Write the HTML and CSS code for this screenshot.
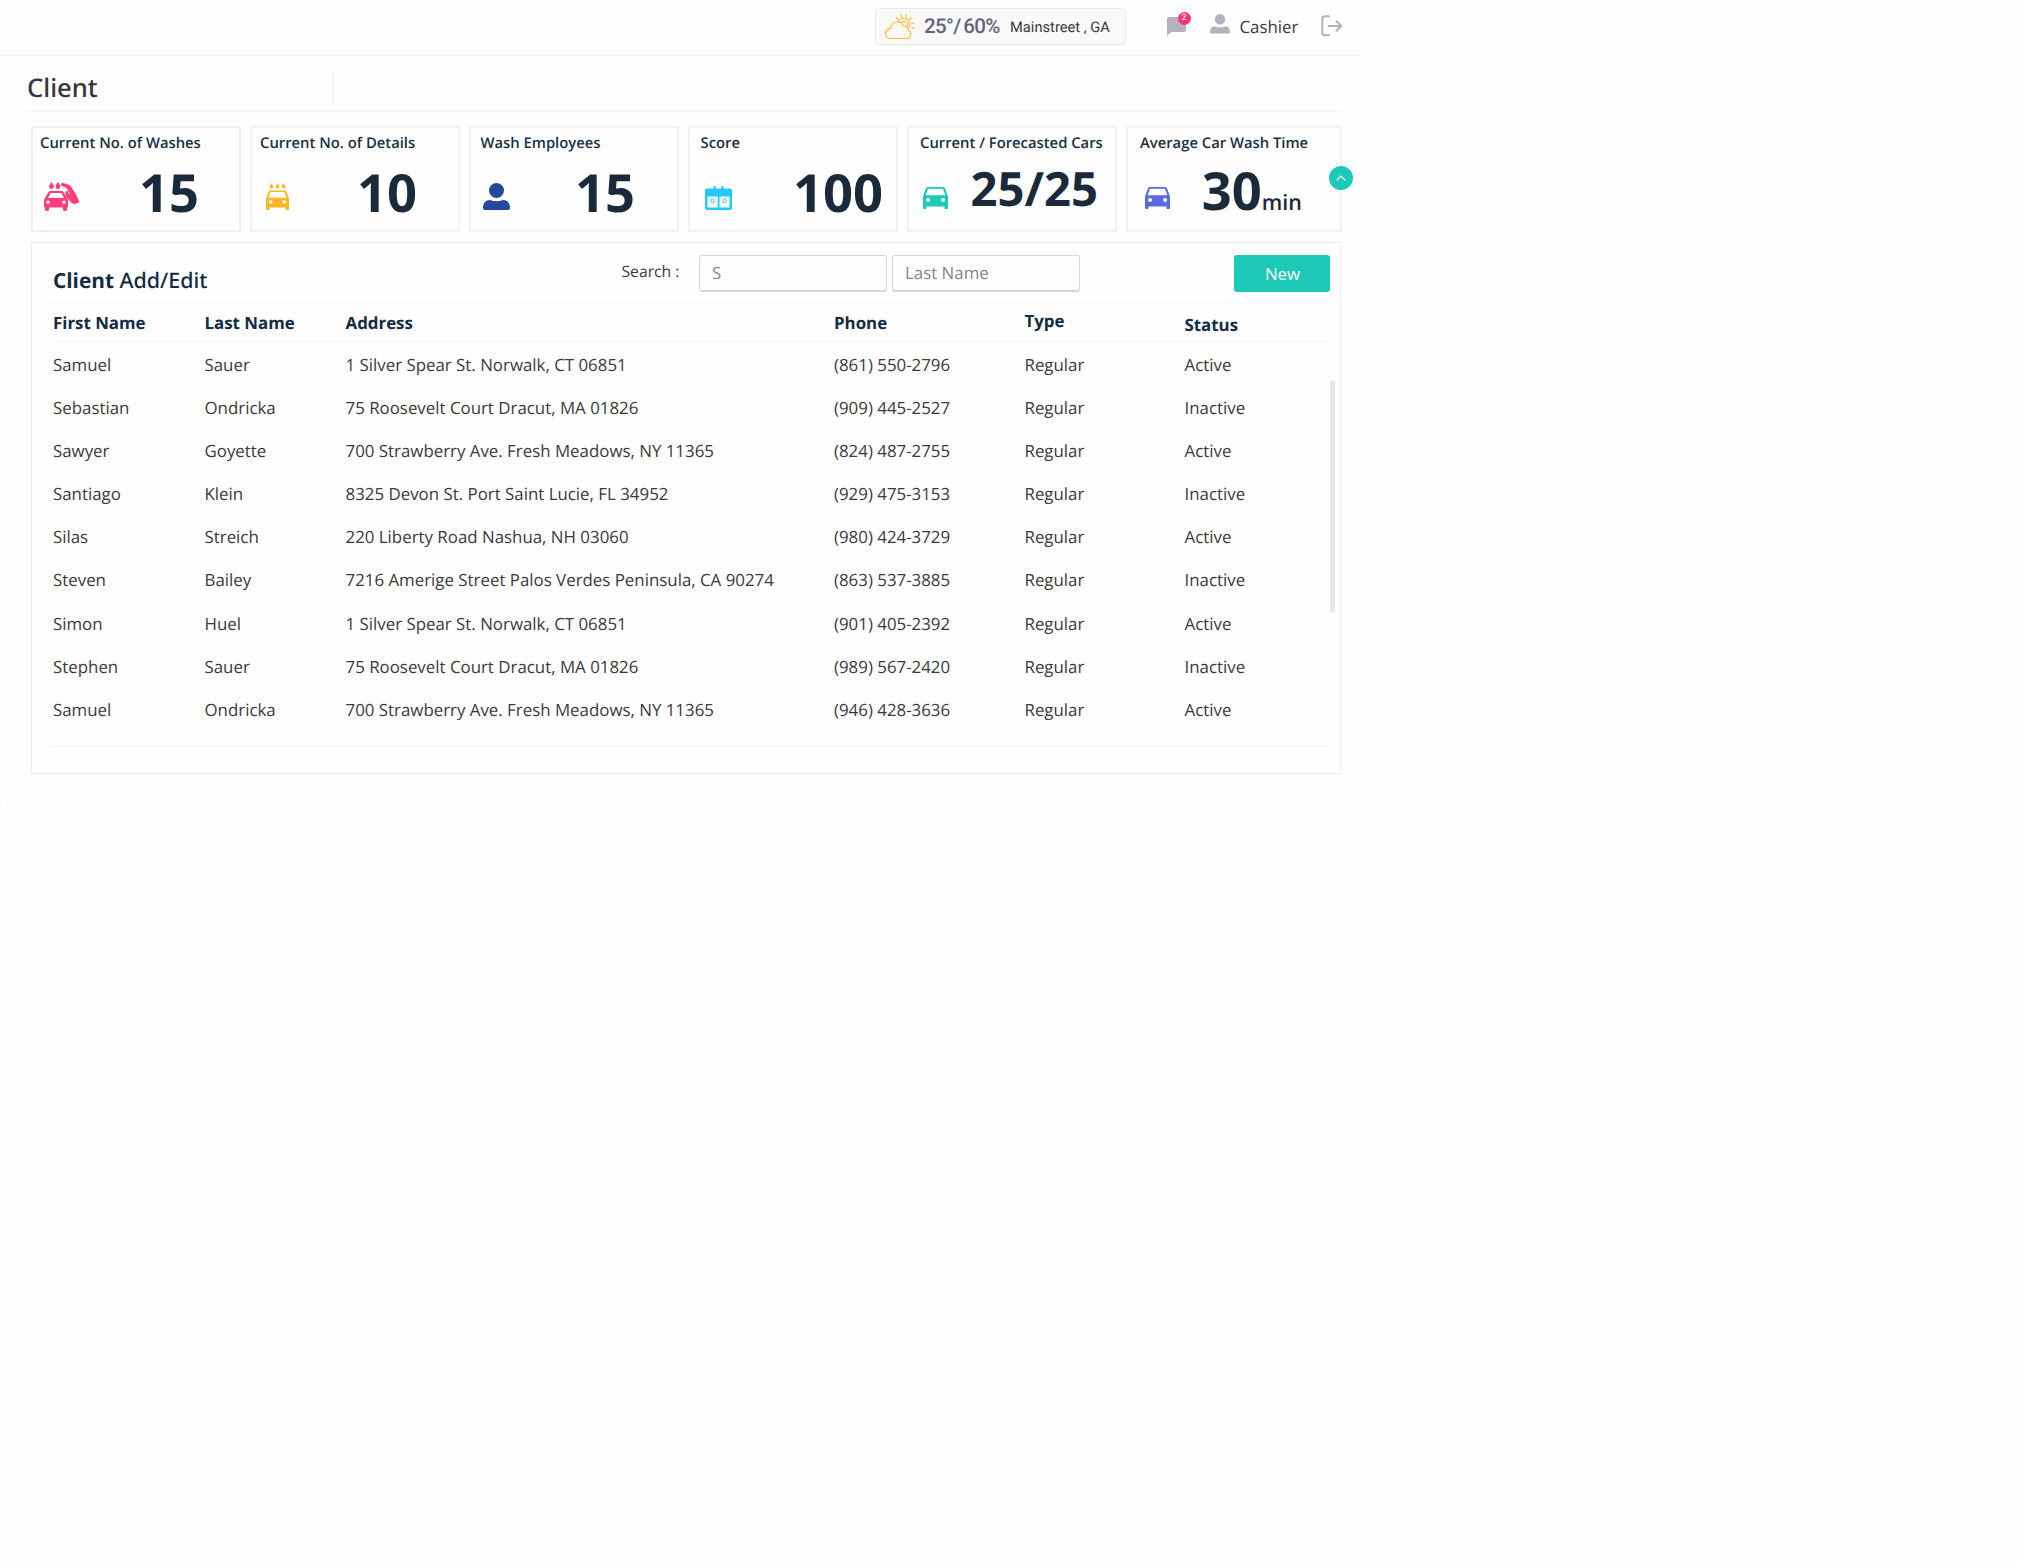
FILE: index.html
```
<!DOCTYPE html>
<html lang="en">
<head>
<meta charset="utf-8">
<title>Client</title>
<link rel="stylesheet" href="styles.css">
</head>
<body>
<div class="app">
  <header class="topbar">
    <div class="weather">
      <svg class="weather-icon" viewBox="0 0 30 26" width="30" height="26" fill="none" stroke="#fdbb2d" stroke-width="1.1" stroke-linecap="round" stroke-linejoin="round">
        <path d="M5.200 24.500H21A4.500 4.500 0 0 0 23.400 16C23.200 12.800 20.700 11.700 18.600 12.300C17.200 9 14.500 7.700 12 7.700C8.500 7.700 5.800 10.500 5.800 14.600C2.500 14.800.6 17 .6 19.500C.6 22.500 2.800 24.500 5.200 24.500Z"/>
        <path d="M13.600 7.400A5.900 5.900 0 1 1 24.200 13.200M16.700 8.600Q18.500 6.700 21 7.600Q23.200 9 22.300 12"/>
        <path d="M11.400 3.600l1.600 2.200M16.200 .6l.6 2.800M21.500 .6l-.6 2.800M26.300 3.600l-2 2M29.300 9l-2.600.5M29.300 14.200l-2.500-.8"/>
      </svg>
      <span class="temp">25°/ 60%</span>
      <span class="place">Mainstreet , GA</span>
    </div>
    <div class="chat">
      <svg viewBox="0 0 19 19" width="19" height="19" fill="#b3b2be"><path d="M2.3 0H16.8A2 2 0 0 1 19 2.2V12.8A2 2 0 0 1 16.8 15H4.2L0 19V2.2A2 2 0 0 1 2.3 0Z"/></svg>
      <span class="badge">2</span>
    </div>
    <div class="user">
      <svg viewBox="0 0 20 20" width="20" height="20" fill="#b3b2be"><circle cx="10" cy="5.2" r="5.2"/><path d="M0 18.2C0 14.500 2 12.500 5 12.500Q10 14.200 15 12.500C18 12.500 20 14.500 20 18.200Q20 19.500 18.500 19.500H1.500Q0 19.500 0 18.200Z"/></svg>
      <span>Cashier</span>
    </div>
    <svg class="logout" viewBox="0 0 22 22" width="22" height="22" fill="none" stroke="#b3b2be" stroke-width="2" stroke-linecap="round" stroke-linejoin="round"><path d="M8 1.300H4Q1.300 1.300 1.300 4V17.500Q1.300 20.200 4 20.200H8M7.500 11H20M15.500 6.300L20.300 11L15.500 15.700"/></svg>
  </header>

  <div class="title-row"><h1>Client</h1><span class="title-divider"></span></div>

  <section class="stats">
    <article class="stat stat-washes">
      <h2>Current No. of Washes</h2>
      <svg viewBox="0 0 36 29" width="36" height="29" fill="#ff3d7a">
        <path d="M7.500 0Q10.500 4 9.800 5.300A2.400 2.400 0 0 1 5.200 5.300Q4.500 4 7.500 0ZM14 0Q17 4 16.300 5.300A2.400 2.400 0 0 1 11.700 5.300Q11 4 14 0Z"/>
        <path d="M17 2.200Q17.500.5 19.500 1L24.500 2.800Q26.500 3.500 27.500 5.200L32 12.500L35.500 20L30.800 22.300Q27 21 24.800 18Q21.500 14.500 21.300 11Q21.300 8.500 23 8.500L25.500 12.500L25.800 11.500L22.500 6L18 4Q16.500 3.300 17 2.200Z"/>
        <path fill-rule="evenodd" d="M6.500 9H17.500Q19 9 19.700 10.200L23 16Q24 17.500 24 19V24Q24 25.500 23 25.500V27.500Q23 29 21 29T19 27.500V25.500H5V27.500Q5 29 3 29T1 27.500V25.500Q0 25.500 0 24V19Q0 17.500 1 16L4.300 10.200Q5 9 6.500 9ZM6.700 11L4 16H20L17.300 11ZM4 18.400a1.700 1.700 0 1 0 .1 0ZM20 18.400a1.700 1.700 0 1 0 .1 0Z"/>
      </svg>
      <strong>15</strong>
    </article>
    <article class="stat stat-details">
      <h2>Current No. of Details</h2>
      <svg viewBox="0 0 23 27" width="23" height="27" fill="#ffb721">
        <path d="M5.500 0Q8 4 7.200 4.500A2 2 0 0 1 3.800 4.500Q3 4 5.500 0ZM11.500 0Q14 4 13.200 4.500A2 2 0 0 1 9.800 4.500Q9 4 11.500 0ZM17.500 0Q20 4 19.200 4.500A2 2 0 0 1 15.800 4.500Q15 4 17.500 0Z"/>
        <path fill-rule="evenodd" d="M4.300 7.500H18.700Q20 7.500 20.400 8.500L23 16V26Q23 27 22 27H20.500Q19.500 27 19.500 26V24.500H3.500V26Q3.500 27 2.500 27H1Q0 27 0 26V16L2.600 8.500Q3 7.500 4.300 7.500ZM4.500 9L2.500 14.700H20.500L18.500 9ZM4.700 17.200a1.800 1.800 0 1 0 .1 0ZM18.200 17.200a1.800 1.800 0 1 0 .1 0Z"/>
      </svg>
      <strong>10</strong>
    </article>
    <article class="stat stat-employees">
      <h2>Wash Employees</h2>
      <svg viewBox="0 0 27 27" width="27" height="27" fill="#23499c"><circle cx="13.500" cy="7.500" r="7.500"/><path d="M0 25C0 20 2.500 17 7 17Q13.500 19.500 20 17C24.500 17 27 20 27 25Q27 27 25 27H2Q0 27 0 25Z"/></svg>
      <strong>15</strong>
    </article>
    <article class="stat stat-score">
      <h2>Score</h2>
      <svg viewBox="0 0 27 24" width="27" height="24"><path fill="#25c8fe" fill-rule="evenodd" d="M2 2.500H8.500V1a1.100 1.100 0 0 1 2.200 0V2.500H16.300V1a1.100 1.100 0 0 1 2.200 0V2.500H25Q27 2.500 27 4.500V22Q27 24 25 24H2Q0 24 0 22V4.500Q0 2.500 2 2.500ZM2.500 10.500V21.500H12.700V10.500ZM14.500 10.500V21.500H24.500V10.500Z"/><g fill="none" stroke="#25c8fe"><ellipse cx="7.600" cy="14.800" rx="1.600" ry="2.200"/><ellipse cx="19.600" cy="14.800" rx="1.600" ry="2.200"/></g></svg>
      <strong>100</strong>
    </article>
    <article class="stat stat-cars">
      <h2>Current / Forecasted Cars</h2>
      <svg viewBox="0 0 25 22" width="25" height="22" fill="#1fc9b7"><path fill-rule="evenodd" d="M5 0H20Q21.500 0 22 1.200L25 9.500V21Q25 22 24 22H22.500Q21.500 22 21.500 21V19.500H3.500V21Q3.500 22 2.500 22H1Q0 22 0 21V9.500L3 1.200Q3.500 0 5 0ZM5 1.800L2.700 8.300H22.300L20 1.800ZM5 11a2 2 0 1 0 .1 0ZM20 11a2 2 0 1 0 .1 0Z"/></svg>
      <strong>25/25</strong>
    </article>
    <article class="stat stat-time">
      <h2>Average Car Wash Time</h2>
      <svg viewBox="0 0 25 22" width="25" height="22" fill="#5b6adf"><path fill-rule="evenodd" d="M5 0H20Q21.500 0 22 1.200L25 9.500V21Q25 22 24 22H22.500Q21.500 22 21.500 21V19.500H3.500V21Q3.500 22 2.500 22H1Q0 22 0 21V9.500L3 1.200Q3.500 0 5 0ZM5 1.800L2.700 8.300H22.300L20 1.800ZM5 11a2 2 0 1 0 .1 0ZM20 11a2 2 0 1 0 .1 0Z"/></svg>
      <strong>30<small>min</small></strong>
      <button class="collapse" aria-label="Collapse"><svg viewBox="0 0 10 6" width="10" height="6" fill="none" stroke="#fff" stroke-width="1.200"><path d="M.7 5.300L5 1L9.300 5.300"/></svg></button>
    </article>
  </section>

  <section class="panel">
    <div class="toolbar">
      <h2><b>Client</b> Add/Edit</h2>
      <label>Search :</label>
      <div class="field">S</div>
      <div class="field">Last Name</div>
      <button class="new">New</button>
    </div>
    <div class="row head"><span>First Name</span><span>Last Name</span><span>Address</span><span>Phone</span><span class="type">Type</span><span class="status">Status</span></div>
    <div class="rows">
      <div class="row"><span>Samuel</span><span>Sauer</span><span>1 Silver Spear St. Norwalk, CT 06851</span><span>(861) 550-2796</span><span>Regular</span><span>Active</span></div>
      <div class="row"><span>Sebastian</span><span>Ondricka</span><span>75 Roosevelt Court Dracut, MA 01826</span><span>(909) 445-2527</span><span>Regular</span><span>Inactive</span></div>
      <div class="row"><span>Sawyer</span><span>Goyette</span><span>700 Strawberry Ave. Fresh Meadows, NY 11365</span><span>(824) 487-2755</span><span>Regular</span><span>Active</span></div>
      <div class="row"><span>Santiago</span><span>Klein</span><span>8325 Devon St. Port Saint Lucie, FL 34952</span><span>(929) 475-3153</span><span>Regular</span><span>Inactive</span></div>
      <div class="row"><span>Silas</span><span>Streich</span><span>220 Liberty Road Nashua, NH 03060</span><span>(980) 424-3729</span><span>Regular</span><span>Active</span></div>
      <div class="row"><span>Steven</span><span>Bailey</span><span>7216 Amerige Street Palos Verdes Peninsula, CA 90274</span><span>(863) 537-3885</span><span>Regular</span><span>Inactive</span></div>
      <div class="row"><span>Simon</span><span>Huel</span><span>1 Silver Spear St. Norwalk, CT 06851</span><span>(901) 405-2392</span><span>Regular</span><span>Active</span></div>
      <div class="row"><span>Stephen</span><span>Sauer</span><span>75 Roosevelt Court Dracut, MA 01826</span><span>(989) 567-2420</span><span>Regular</span><span>Inactive</span></div>
      <div class="row"><span>Samuel</span><span>Ondricka</span><span>700 Strawberry Ave. Fresh Meadows, NY 11365</span><span>(946) 428-3636</span><span>Regular</span><span>Active</span></div>
      <span class="scrollbar"></span>
    </div>
  </section>
</div>
</body>
</html>
```
FILE: styles.css
```
* { box-sizing: border-box; }
body { margin: 0; background: #fefefe; color: #3a3a3c; font-family: "Open Sans", sans-serif; font-size: 16.88px; text-rendering: geometricPrecision; }
h1, h2 { margin: 0; font-weight: inherit; }
svg { display: block; flex: none; }
button { border: 0; padding: 0; font: inherit; }
.app { width: 1362px; height: 806px; box-shadow: inset 1px 0 #fafafa; }

.topbar { display: flex; height: 56px; padding-left: 875px; border-bottom: 1px solid #f3f3f4; }
.weather { display: flex; width: 251px; height: 37px; margin-top: 8px; padding-left: 9px; border: 1px solid #e3ecec; border-radius: 4px; background: #f9f9f9; font-family: Roboto, sans-serif; line-height: 37px; white-space: nowrap; }
.weather-icon { margin-top: 5px; }
.temp { width: 86px; margin-left: 9px; color: #63637f; font-size: 20.5px; font-weight: 500; letter-spacing: -.6px; word-spacing: -2px; }
.place { font-size: 14.7px; line-height: 37px; }
.chat { position: relative; width: 19px; margin: 17px 24px 0 40.5px; }
.badge { position: absolute; left: 11px; top: -5px; width: 13px; height: 13px; border-radius: 50%; background: #ff3475; color: #fff; font: 9px/13px Roboto, sans-serif; text-align: center; }
.user { display: flex; width: 111px; gap: 10px; line-height: 53px; }
.user svg { margin-top: 14px; }
.logout { margin-top: 15px; }

.title-row { display: flex; height: 56px; margin: 0 21px 0 27px; border-bottom: 2px solid #f6f6f7; }
.title-row h1 { width: 306px; font-family: "Noto Sans", "Open Sans", sans-serif; font-size: 25.6px; line-height: 64px; font-weight: 500; color: #33343d; }
.title-divider { width: 1px; height: 32px; margin-top: 16px; background: #f3f3f4; }

.stats { display: grid; grid-template-columns: repeat(5, 210px) 216px; gap: 9px; margin: 14px 0 0 31px; }
.stat { position: relative; display: grid; grid-template: 34px 69px / 1fr; height: 106px; border: 2px solid #f2f2f3; color: #1b2a3b; }
.stat-washes { border-color: #ebf1f1; }
.stat h2 { padding-left: 7px; font-size: 14.8px; line-height: 31px; font-weight: 600; color: #1a2f45; white-space: nowrap; }
.stat > svg, .stat > strong { grid-area: 2 / 1; }
.stat strong { justify-self: end; font-size: 52.5px; line-height: 62px; font-weight: 700; white-space: nowrap; }
.stat small { font-size: 21.5px; font-weight: 600; }
.stat-washes > svg { margin: 20px 0 0 11px; }
.stat-washes strong { margin-right: 40px; }
.stat.stat-details h2 { padding-left: 8px; }
.stat-details > svg { margin: 21px 0 0 14px; }
.stat-details strong { margin-right: 41px; }
.stat.stat-employees h2 { padding-left: 9.5px; }
.stat-employees > svg { margin: 21px 0 0 12px; }
.stat-employees strong { margin-right: 42px; }
.stat.stat-score h2 { padding-left: 10.5px; }
.stat-score > svg { margin: 24px 0 0 14.5px; }
.stat-score strong { margin-right: 13px; }
.stat.stat-cars h2 { padding-left: 11px; }
.stat-cars > svg { margin: 25px 0 0 14px; }
.stat-cars strong { margin-right: 17px; font-size: 47.2px; line-height: 53px; }
.stat.stat-time h2 { padding-left: 12px; }
.stat-time > svg { margin: 25px 0 0 17px; }
.stat-time strong { margin-right: 38px; line-height: 57px; }
.collapse { position: absolute; right: -13px; top: 38px; display: grid; place-items: center; width: 24px; height: 24px; border-radius: 50%; background: #1fc9b7; }

.panel { width: 1310px; height: 532px; margin: 10px 0 0 31px; border: 1px solid #e3ecec; border-right-color: #e8eff4; }
.toolbar { display: flex; height: 60px; margin: 0 10px 0 17px; padding: 12px 0 0 4px; border-bottom: 1px solid #f7f7f8; }
.toolbar h2 { width: 568.5px; font-family: "Noto Sans", "Open Sans", sans-serif; font-size: 21.4px; line-height: 51px; font-weight: 500; color: #132c44; }
.toolbar b { font: 700 20.8px "Open Sans", sans-serif; }
.toolbar label { width: 77.5px; font-size: 15.7px; line-height: 33px; }
.field { width: 188px; height: 37px; margin-right: 5px; padding-left: 12px; border: 2px solid #d5d5da; border-width: 1px 1px 2px; border-radius: 3px; line-height: 34px; color: #85858a; }
.new { width: 96px; height: 37px; margin-left: auto; padding-left: 1px; border-radius: 3px; background: #1fc9b7; color: #fff; }
.row { display: grid; grid-template-columns: 151.500px 141px 488.500px 190.500px 160px 1fr; height: 43.100px; padding-left: 4px; line-height: 43px; white-space: nowrap; }
.head { height: 39px; margin: 0 10px 0 17px; border-bottom: 1px solid #f7f7f8; line-height: 40px; font-weight: 700; color: #132c44; }
.head .type { line-height: 36px; }
.head .status { line-height: 44px; }
.rows { position: relative; height: 405px; margin: 0 10px 0 17px; padding-top: 1px; border-bottom: 1px solid #f5f5f6; }
.scrollbar { position: absolute; right: -5px; top: 38px; width: 5px; height: 233px; border-radius: 3px; background: #e8e8ea; }
```
